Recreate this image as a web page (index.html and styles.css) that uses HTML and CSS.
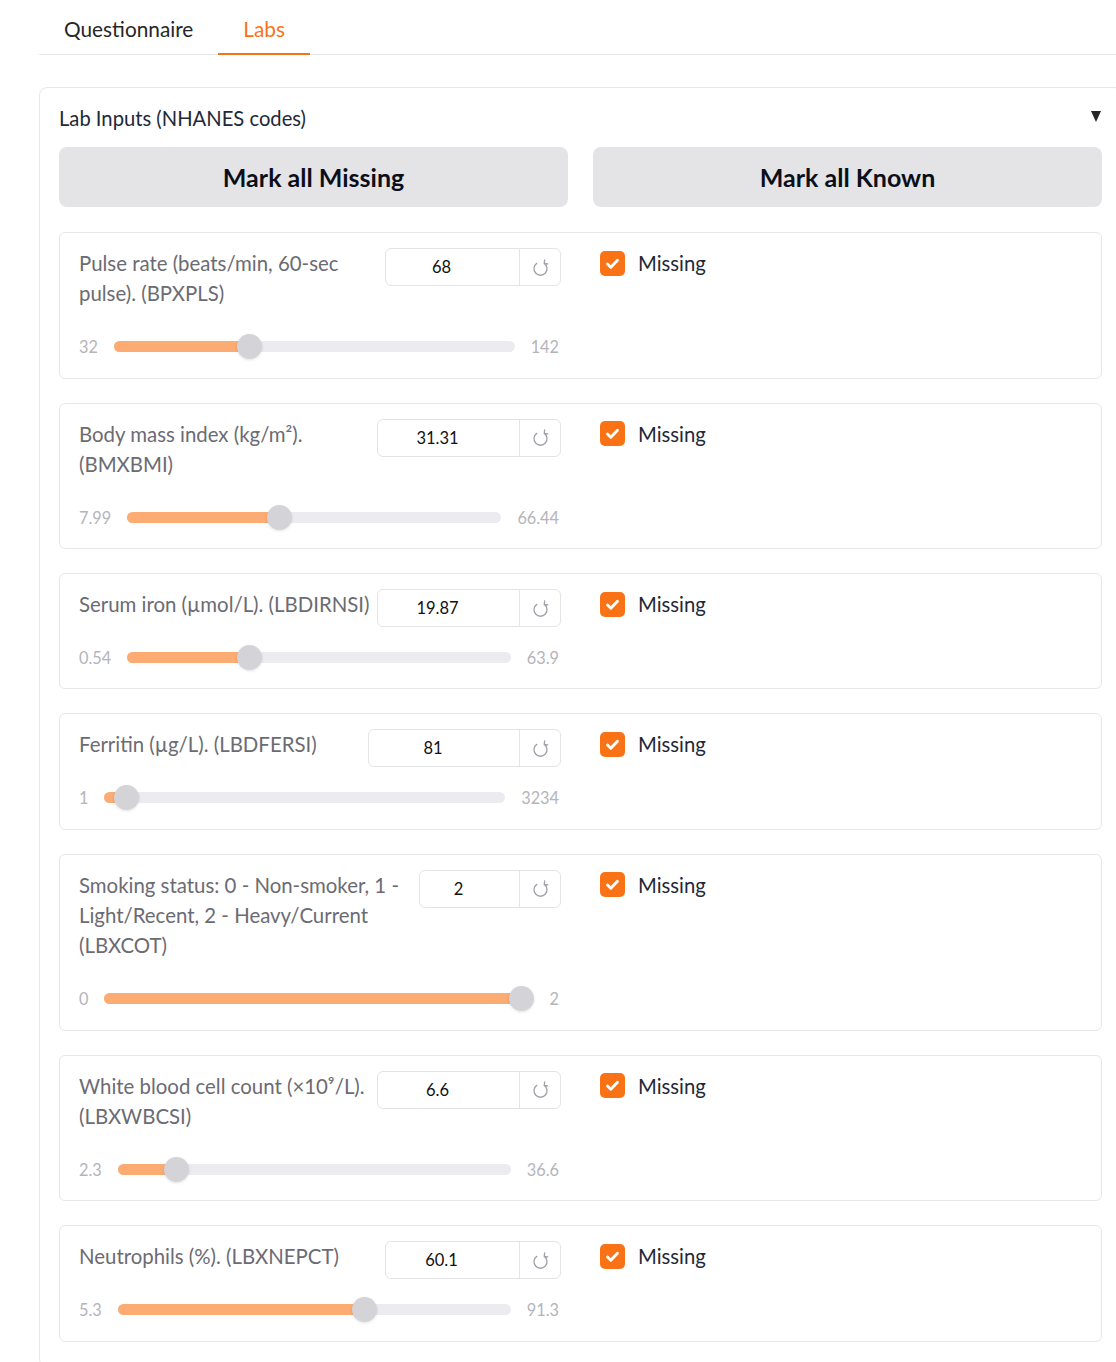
FILE: index.html
```html
<!DOCTYPE html>
<html lang="en">
<head>
<meta charset="utf-8">
<title>Labs</title>
<link rel="stylesheet" href="styles.css">
</head>
<body>
<div class="app">
  <nav class="tabs-nav">
    <div class="tab">Questionnaire</div>
    <div class="tab tab-active">Labs</div>
  </nav>

  <section class="block">
    <div class="acc-head">
      <span>Lab Inputs (NHANES codes)</span>
      <svg class="caret" viewBox="0 0 10 11" width="10" height="11"><polygon points="0,0 10,0 5,11" fill="#27272a"/></svg>
    </div>

    <div class="btn-row">
      <button class="btn">Mark all Missing</button>
      <button class="btn">Mark all Known</button>
    </div>

    <div class="cards">

      <div class="card">
        <div class="col-slider">
          <div class="head">
            <div class="label">Pulse rate (beats/min, 60-sec pulse). (BPXPLS)</div>
            <div class="num w176"><span class="num-val">68</span><span class="num-reset"><svg viewBox="0 0 16 16" width="19" height="19"><path d="M4.85 4.5A5.5 5.5 0 1 0 11.15 4.5M11.5 1.6L11.15 4.6L14.1 5" fill="none" stroke="#a1a1aa" stroke-width="1.1" stroke-linecap="round" stroke-linejoin="round"/></svg></span></div>
          </div>
          <div class="slider">
            <span class="min">32</span>
            <div class="track" style="--p:0.3273"><div class="fill"></div><div class="thumb"></div></div>
            <span class="max">142</span>
          </div>
        </div>
        <label class="check"><span class="box"><svg viewBox="0 0 16 16" width="19" height="19"><path d="M3.8 8.4l2.8 2.8 5.6-6" fill="none" stroke="#fff" stroke-width="2.4" stroke-linecap="round" stroke-linejoin="round"/></svg></span><span>Missing</span></label>
      </div>

      <div class="card">
        <div class="col-slider">
          <div class="head">
            <div class="label">Body mass index (kg/m²). (BMXBMI)</div>
            <div class="num w184"><span class="num-val">31.31</span><span class="num-reset"><svg viewBox="0 0 16 16" width="19" height="19"><path d="M4.85 4.5A5.5 5.5 0 1 0 11.15 4.5M11.5 1.6L11.15 4.6L14.1 5" fill="none" stroke="#a1a1aa" stroke-width="1.1" stroke-linecap="round" stroke-linejoin="round"/></svg></span></div>
          </div>
          <div class="slider">
            <span class="min">7.99</span>
            <div class="track" style="--p:0.399"><div class="fill"></div><div class="thumb"></div></div>
            <span class="max">66.44</span>
          </div>
        </div>
        <label class="check"><span class="box"><svg viewBox="0 0 16 16" width="19" height="19"><path d="M3.8 8.4l2.8 2.8 5.6-6" fill="none" stroke="#fff" stroke-width="2.4" stroke-linecap="round" stroke-linejoin="round"/></svg></span><span>Missing</span></label>
      </div>

      <div class="card">
        <div class="col-slider">
          <div class="head">
            <div class="label">Serum iron (µmol/L). (LBDIRNSI)</div>
            <div class="num w184"><span class="num-val">19.87</span><span class="num-reset"><svg viewBox="0 0 16 16" width="19" height="19"><path d="M4.85 4.5A5.5 5.5 0 1 0 11.15 4.5M11.5 1.6L11.15 4.6L14.1 5" fill="none" stroke="#a1a1aa" stroke-width="1.1" stroke-linecap="round" stroke-linejoin="round"/></svg></span></div>
          </div>
          <div class="slider">
            <span class="min">0.54</span>
            <div class="track" style="--p:0.3051"><div class="fill"></div><div class="thumb"></div></div>
            <span class="max">63.9</span>
          </div>
        </div>
        <label class="check"><span class="box"><svg viewBox="0 0 16 16" width="19" height="19"><path d="M3.8 8.4l2.8 2.8 5.6-6" fill="none" stroke="#fff" stroke-width="2.4" stroke-linecap="round" stroke-linejoin="round"/></svg></span><span>Missing</span></label>
      </div>

      <div class="card">
        <div class="col-slider">
          <div class="head">
            <div class="label">Ferritin (µg/L). (LBDFERSI)</div>
            <div class="num w193"><span class="num-val">81</span><span class="num-reset"><svg viewBox="0 0 16 16" width="19" height="19"><path d="M4.85 4.5A5.5 5.5 0 1 0 11.15 4.5M11.5 1.6L11.15 4.6L14.1 5" fill="none" stroke="#a1a1aa" stroke-width="1.1" stroke-linecap="round" stroke-linejoin="round"/></svg></span></div>
          </div>
          <div class="slider">
            <span class="min">1</span>
            <div class="track" style="--p:0.0247"><div class="fill"></div><div class="thumb"></div></div>
            <span class="max">3234</span>
          </div>
        </div>
        <label class="check"><span class="box"><svg viewBox="0 0 16 16" width="19" height="19"><path d="M3.8 8.4l2.8 2.8 5.6-6" fill="none" stroke="#fff" stroke-width="2.4" stroke-linecap="round" stroke-linejoin="round"/></svg></span><span>Missing</span></label>
      </div>

      <div class="card">
        <div class="col-slider">
          <div class="head">
            <div class="label">Smoking status: 0 - Non-smoker, 1 - Light/Recent, 2 - Heavy/Current (LBXCOT)</div>
            <div class="num w142"><span class="num-val">2</span><span class="num-reset"><svg viewBox="0 0 16 16" width="19" height="19"><path d="M4.85 4.5A5.5 5.5 0 1 0 11.15 4.5M11.5 1.6L11.15 4.6L14.1 5" fill="none" stroke="#a1a1aa" stroke-width="1.1" stroke-linecap="round" stroke-linejoin="round"/></svg></span></div>
          </div>
          <div class="slider">
            <span class="min">0</span>
            <div class="track" style="--p:1"><div class="fill"></div><div class="thumb"></div></div>
            <span class="max">2</span>
          </div>
        </div>
        <label class="check"><span class="box"><svg viewBox="0 0 16 16" width="19" height="19"><path d="M3.8 8.4l2.8 2.8 5.6-6" fill="none" stroke="#fff" stroke-width="2.4" stroke-linecap="round" stroke-linejoin="round"/></svg></span><span>Missing</span></label>
      </div>

      <div class="card">
        <div class="col-slider">
          <div class="head">
            <div class="label">White blood cell count (×10⁹/L). (LBXWBCSI)</div>
            <div class="num w184"><span class="num-val">6.6</span><span class="num-reset"><svg viewBox="0 0 16 16" width="19" height="19"><path d="M4.85 4.5A5.5 5.5 0 1 0 11.15 4.5M11.5 1.6L11.15 4.6L14.1 5" fill="none" stroke="#a1a1aa" stroke-width="1.1" stroke-linecap="round" stroke-linejoin="round"/></svg></span></div>
          </div>
          <div class="slider">
            <span class="min">2.3</span>
            <div class="track" style="--p:0.1254"><div class="fill"></div><div class="thumb"></div></div>
            <span class="max">36.6</span>
          </div>
        </div>
        <label class="check"><span class="box"><svg viewBox="0 0 16 16" width="19" height="19"><path d="M3.8 8.4l2.8 2.8 5.6-6" fill="none" stroke="#fff" stroke-width="2.4" stroke-linecap="round" stroke-linejoin="round"/></svg></span><span>Missing</span></label>
      </div>

      <div class="card">
        <div class="col-slider">
          <div class="head">
            <div class="label">Neutrophils (%). (LBXNEPCT)</div>
            <div class="num w176"><span class="num-val">60.1</span><span class="num-reset"><svg viewBox="0 0 16 16" width="19" height="19"><path d="M4.85 4.5A5.5 5.5 0 1 0 11.15 4.5M11.5 1.6L11.15 4.6L14.1 5" fill="none" stroke="#a1a1aa" stroke-width="1.1" stroke-linecap="round" stroke-linejoin="round"/></svg></span></div>
          </div>
          <div class="slider">
            <span class="min">5.3</span>
            <div class="track" style="--p:0.6372"><div class="fill"></div><div class="thumb"></div></div>
            <span class="max">91.3</span>
          </div>
        </div>
        <label class="check"><span class="box"><svg viewBox="0 0 16 16" width="19" height="19"><path d="M3.8 8.4l2.8 2.8 5.6-6" fill="none" stroke="#fff" stroke-width="2.4" stroke-linecap="round" stroke-linejoin="round"/></svg></span><span>Missing</span></label>
      </div>

    </div>
  </section>
</div>
</body>
</html>
```

FILE: styles.css
```css
html, body {
  margin: 0;
  padding: 0;
  background: #ffffff;
  overflow: hidden;
}

body {
  font-family: Lato, "Liberation Sans", sans-serif;
  color: #1f2937;
}

.app {
  margin-left: 39px;
  width: 1083px;
}

/* Tabs */
.tabs-nav {
  display: flex;
  border-bottom: 1px solid #e5e7eb;
}

.tab {
  box-sizing: border-box;
  height: 55px;
  margin-bottom: -1px;
  padding: 14px 25px 0;
  font-size: 20.8px;
  line-height: 30px;
  color: #27272a;
}

.tab-active {
  color: #f97316;
  border-bottom: 2px solid #f97316;
}

/* Accordion block */
.block {
  margin-top: 32px;
  border: 1px solid #e5e7eb;
  border-radius: 8px;
  padding: 15px 19px 24px 19px;
}

.acc-head {
  display: flex;
  justify-content: space-between;
  align-items: center;
  font-size: 20.2px;
  line-height: 30px;
  color: #1f2937;
}

.caret {
  display: block;
  margin-right: 1px;
  margin-top: -3px;
}

.btn-row {
  display: grid;
  grid-template-columns: 1fr 1fr;
  gap: 25px;
  margin-top: 14px;
}

.btn {
  height: 60px;
  border: none;
  border-radius: 8px;
  background: #e4e4e7;
  font-family: Lato, "Liberation Sans", sans-serif;
  font-size: 25px;
  font-weight: 700;
  color: #0b0f19;
}

.cards {
  display: flex;
  flex-direction: column;
  gap: 24px;
  margin-top: 25px;
}

.card {
  display: flex;
  align-items: flex-start;
  border: 1px solid #e5e7eb;
  border-radius: 6px;
  padding: 15px 20px 18px 19px;
}

.col-slider {
  width: 482px;
  flex: none;
}

.head {
  display: flex;
  align-items: flex-start;
  justify-content: space-between;
  gap: 4px;
}

.label {
  flex: 1 1 auto;
  font-size: 20.4px;
  line-height: 30.3px;
  padding-bottom: 8px;
  color: #6b6b73;
}

.num {
  flex: none;
  box-sizing: border-box;
  display: flex;
  height: 38px;
  border: 1px solid #e4e4e7;
  border-radius: 6px;
}

.w142 { width: 142px; }
.w176 { width: 176px; }
.w184 { width: 184px; }
.w193 { width: 193px; }

.num-val {
  flex: 1;
  text-align: center;
  padding-right: 22px;
  font-size: 16.5px;
  line-height: 36px;
  color: #111111;
}

.num-reset {
  width: 40px;
  border-left: 1px solid #e4e4e7;
  display: flex;
  align-items: center;
  justify-content: center;
}

.slider {
  display: flex;
  align-items: center;
  gap: 16px;
  height: 26px;
  margin-top: 17px;
  padding-right: 2px;
}

.min, .max {
  font-size: 16.3px;
  color: #b4b4bb;
}

.track {
  flex: 1;
  position: relative;
  height: 11px;
  border-radius: 6px;
  background: #ececf0;
}

.fill {
  position: absolute;
  left: 0;
  top: 0;
  bottom: 0;
  width: calc(12.5px + var(--p) * (100% - 25px));
  border-radius: 6px;
  background: #fcab72;
}

.thumb {
  position: absolute;
  top: 50%;
  margin-top: -12.5px;
  left: calc(var(--p) * (100% - 25px));
  width: 25px;
  height: 25px;
  border-radius: 50%;
  background: #d4d4d8;
  box-shadow: 0 1px 3px rgba(0, 0, 0, 0.12);
}

.check {
  display: flex;
  align-items: center;
  gap: 13px;
  margin-left: 39px;
  font-size: 20.3px;
  line-height: 30px;
  color: #1f2937;
}

.box {
  width: 25px;
  height: 25px;
  border-radius: 5px;
  background: #f97316;
  display: flex;
  align-items: center;
  justify-content: center;
}
```
